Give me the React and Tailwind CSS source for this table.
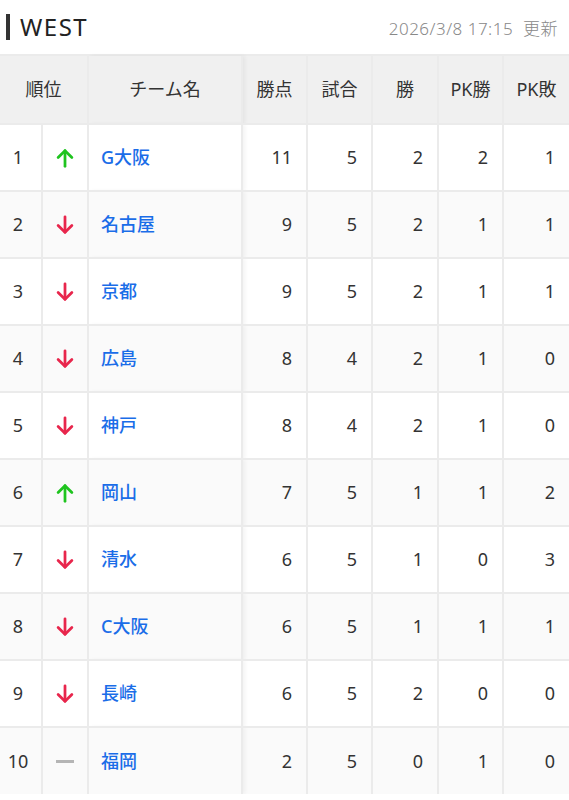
import React from "react";

const rows = [
  [1, "up", "G大阪", 11, 5, 2, 2, 1],
  [2, "down", "名古屋", 9, 5, 2, 1, 1],
  [3, "down", "京都", 9, 5, 2, 1, 1],
  [4, "down", "広島", 8, 4, 2, 1, 0],
  [5, "down", "神戸", 8, 4, 2, 1, 0],
  [6, "up", "岡山", 7, 5, 1, 1, 2],
  [7, "down", "清水", 6, 5, 1, 0, 3],
  [8, "down", "C大阪", 6, 5, 1, 1, 1],
  [9, "down", "長崎", 6, 5, 2, 0, 0],
  [10, "flat", "福岡", 2, 5, 0, 1, 0],
];

function Trend({ t }) {
  if (t === "flat")
    return <div className="mx-auto h-[3px] w-[18px] bg-[#b5b5b5]" />;
  const up = t === "up";
  return (
    <svg width="22" height="22" viewBox="0 0 24 24" className="mx-auto" fill="none"
      stroke={up ? "#1fc41f" : "#e8264c"} strokeWidth="3" strokeLinecap="round" strokeLinejoin="round">
      {up ? (
        <>
          <path d="M12 21V4" />
          <path d="M4.5 11.5L12 4l7.5 7.5" />
        </>
      ) : (
        <>
          <path d="M12 3v17" />
          <path d="M4.5 12.5L12 20l7.5-7.5" />
        </>
      )}
    </svg>
  );
}

export default function App() {
  const font = { fontFamily: '"Noto Sans", "Noto Sans CJK JP", sans-serif' };
  const cell = "border-2 border-[#ebebeb]";
  return (
    <div className="w-[569px] bg-white text-[#333]" style={font}>
      <div className="flex h-[56px] items-center justify-between border-b-2 border-[#ebebeb] pl-[6px] pr-[11px]">
        <div className="flex items-center gap-[10px]">
          <div className="h-[26px] w-[4px] bg-[#333]" />
          <span className="text-[24px] font-normal leading-none tracking-[1.5px] text-[#222]">WEST</span>
        </div>
        <span className="pt-1 text-[17px] font-light tracking-[0.5px] text-[#888]">2026/3/8 17:15&nbsp; 更新</span>
      </div>
      <table className="w-[569px] table-fixed border-collapse border-hidden">
        <colgroup>
          <col className="w-[42px]" />
          <col className="w-[46px]" />
          <col className="w-[154px]" />
          <col className="w-[65px]" />
          <col className="w-[65px]" />
          <col className="w-[66px]" />
          <col className="w-[65px]" />
          <col className="w-[66px]" />
        </colgroup>
        <thead>
          <tr className="h-[68px] bg-[#f0f0f0] text-[18px] text-[#333]">
            <th colSpan={2} className={`${cell} font-normal`}>順位</th>
            <th className={`${cell} font-normal shadow-[3px_0_4px_rgba(0,0,0,0.05)]`}>チーム名</th>
            <th className={`${cell} font-normal`}>勝点</th>
            <th className={`${cell} font-normal`}>試合</th>
            <th className={`${cell} font-normal`}>勝</th>
            <th className={`${cell} font-normal`}>PK勝</th>
            <th className={`${cell} font-normal`}>PK敗</th>
          </tr>
        </thead>
        <tbody>
          {rows.map((r, i) => (
            <tr key={r[0]} className={`h-[67px] text-[18px] font-normal text-[#333] ${i % 2 ? "bg-[#fafafa]" : "bg-white"}`}>
              <td className={`${cell} pr-[5px] text-center`}>{r[0]}</td>
              <td className={cell}><div className="flex items-center justify-center"><Trend t={r[1]} /></div></td>
              <td className={`${cell} pl-[12px] text-[18px] font-medium text-[#1a6de8] shadow-[3px_0_4px_rgba(0,0,0,0.05)]`}>{r[2]}</td>
              {r.slice(3).map((v, j) => (
                <td key={j} className={`${cell} pr-[14px] text-right`}>{v}</td>
              ))}
            </tr>
          ))}
        </tbody>
      </table>
    </div>
  );
}
